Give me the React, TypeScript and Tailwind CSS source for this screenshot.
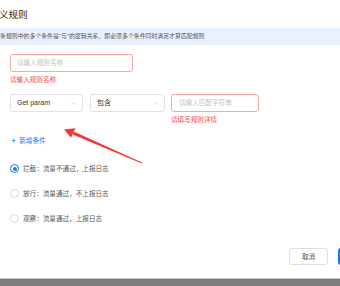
import { ChevronDown } from 'lucide-react'

const font = { fontFamily: '"Liberation Sans", "Noto Sans CJK SC", sans-serif' }

function Radio({ checked, label }: { checked?: boolean; label: string }) {
  return (
    <div className="flex items-center gap-[4px]">
      <span
        className={
          checked
            ? 'flex h-[9px] w-[9px] items-center justify-center rounded-full border border-[#1677ff]'
            : 'h-[9px] w-[9px] rounded-full border border-[#d9d9d9]'
        }
      >
        {checked && <span className="h-[4px] w-[4px] rounded-full bg-[#1677ff]" />}
      </span>
      <span className="text-[6.6px] text-[#595959]">{label}</span>
    </div>
  )
}

function Select({ value, width }: { value: string; width: string }) {
  return (
    <div
      className={`flex h-[18px] ${width} items-center justify-between rounded-[3px] border border-[#e3e3e3] pl-[6px] pr-[5px]`}
    >
      <span className="text-[7px] text-[#333]">{value}</span>
      <ChevronDown className="h-[7px] w-[7px] text-[#b5b5b5]" strokeWidth={1.5} />
    </div>
  )
}

export default function App() {
  return (
    <div className="relative flex h-[286px] w-[340px] flex-col overflow-hidden bg-white" style={font}>
      <h1 className="ml-[-1px] mt-[7px] h-[15px] text-[9.5px] leading-[15px] text-[#262626]">义规则</h1>

      <div className="mt-[6px] flex h-[17px] items-center bg-[#e9f1fe]">
        <p className="whitespace-nowrap text-[5.9px] text-[#555]">
          条规则中的多个条件是"与"的逻辑关系，即必须多个条件同时满足才算匹配规则
        </p>
      </div>

      <div className="flex flex-col px-[10px]">
        <div className="mt-[9px] flex h-[18px] w-[123px] items-center rounded-[3px] border border-[#f7a5a5] px-[6px]">
          <span className="text-[6.6px] text-[#bfbfbf]">请输入规则名称</span>
        </div>
        <p className="mt-[3px] text-[6.6px] leading-[10px] text-[#f5484a]">请输入规则名称</p>

        <div className="mt-[9px] flex items-start gap-[7px]">
          <Select value="Get param" width="w-[73px]" />
          <Select value="包含" width="w-[75px]" />
          <div className="ml-[-1px] flex flex-col">
            <div className="flex h-[18px] w-[88px] items-center rounded-[3px] border border-[#f7a5a5] px-[7px]">
              <span className="text-[6.6px] text-[#bfbfbf]">请输入匹配字符串</span>
            </div>
            <p className="mt-[3px] text-[6.6px] leading-[10px] text-[#f5484a]">请填写规则详情</p>
          </div>
        </div>

        <div className="mt-[11px] flex items-center gap-[3px] pl-[1px] text-[#1677ff]">
          <span className="text-[9px] leading-[10px]">+</span>
          <span className="text-[6.6px]">新增条件</span>
        </div>

        <div className="mt-[18px] flex flex-col gap-[15px]">
          <Radio checked label="拦截：流量不通过，上报日志" />
          <Radio label="放行：流量通过，不上报日志" />
          <Radio label="观察：流量通过，上报日志" />
        </div>
      </div>

      <div className="mt-auto flex justify-end gap-[10px] pb-[13px]">
        <button className="flex h-[17px] w-[39px] items-center justify-center rounded-[3px] border border-[#e0e0e0] bg-white text-[6.6px] text-[#555]">
          取消
        </button>
        <button className="mr-[-4px] h-[17px] w-[6px] rounded-[3px] bg-[#1677ff]" />
      </div>

      <div className="h-[8px] border-t border-[#c4c4c4] bg-[#7d7d7d]" />

      <svg className="pointer-events-none absolute left-0 top-0" width="340" height="286">
        <polygon points="64,129.5 75.4,128.2 71,137.8" fill="#ef3b3b" />
        <polygon points="73.8,131.6 142.1,162.6 141.9,163.4 72.6,134.4" fill="#ef3b3b" />
      </svg>
    </div>
  )
}
